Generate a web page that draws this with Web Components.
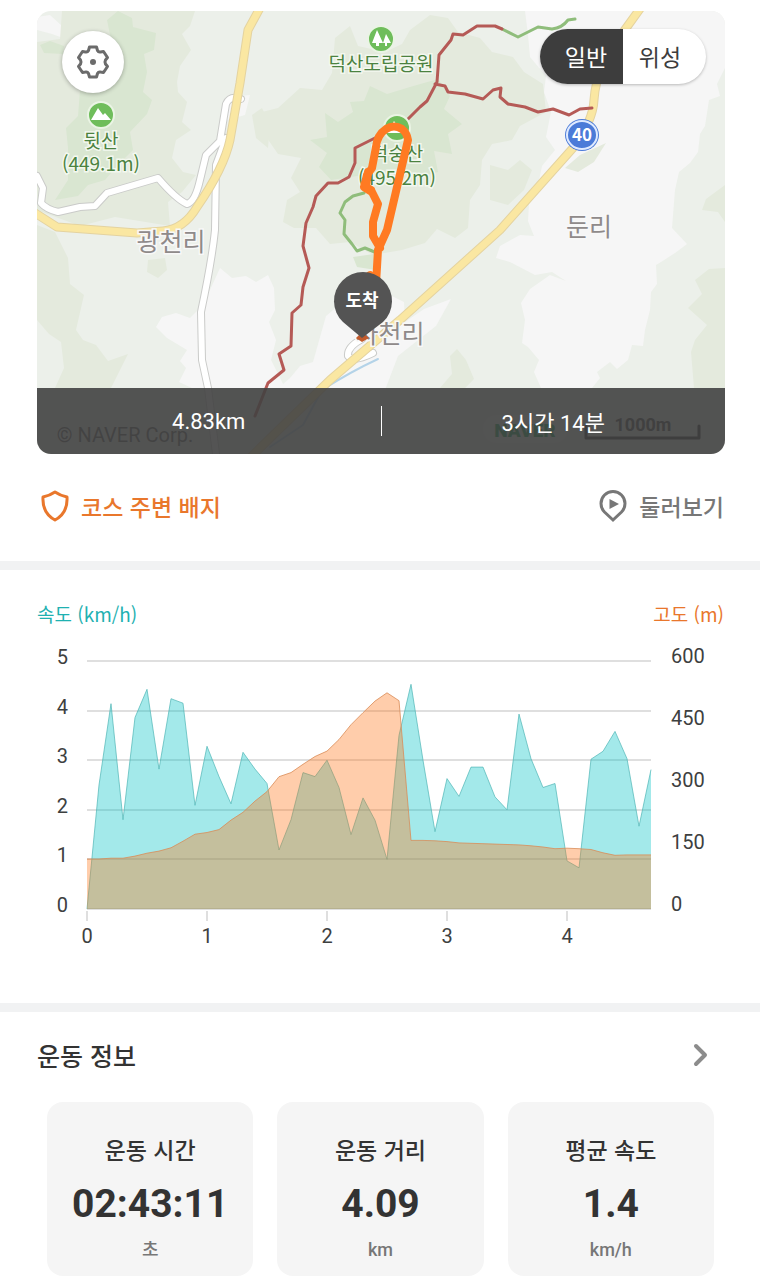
<!DOCTYPE html>
<html lang="ko">
<head>
<meta charset="utf-8">
<meta name="viewport" content="width=device-width, initial-scale=1">
<title>코스 기록</title>
<style>
  body {
    margin: 0;
    background: #fff;
    color: #333;
    font-family: Roboto, "Noto Sans CJK KR", sans-serif;
    --korean: "Noto Sans CJK KR", sans-serif;
    --gutter-left: 37px;
    --gutter-right: 36px;
    --orange: #e9772c;
    --teal: #1fb1b1;
    --gray: #777;
  }
</style>
</head>
<body>
<activity-page>
  <course-map distance="4.83km" duration="3시간 14분"></course-map>
  <course-actions></course-actions>
  <section-divider></section-divider>
  <speed-chart></speed-chart>
  <section-divider></section-divider>
  <workout-info heading="운동 정보">
    <stat-card label="운동 시간" unit="초">02:43:11</stat-card>
    <stat-card label="운동 거리" unit="km">4.09</stat-card>
    <stat-card label="평균 속도" unit="km/h">1.4</stat-card>
  </workout-info>
</activity-page>

<script>
function define(name, render, setup) {
  customElements.define(name, class extends HTMLElement {
    connectedCallback() {
      if (this.shadowRoot) return;
      this.attachShadow({ mode: 'open' });
      this.shadowRoot.innerHTML = render(this);
      if (setup) setup(this.shadowRoot);
    }
  });
}

const BUTTON_RESET = `
  button {
    border: 0;
    padding: 0;
    background: none;
    color: inherit;
    font: inherit;
    cursor: pointer;
  }
`;

// -- activity-page --
define('activity-page', () => `
  <style>
    :host { display: block; padding: 11px 0 4px; }
  </style>
  <slot></slot>
`);

// -- section-divider --
define('section-divider', () => `
  <style>
    :host { display: block; height: 9px; background: #f1f2f3; }
  </style>
`);

// -- map-toggle --
define('map-toggle', () => `
  <style>
    ${BUTTON_RESET}
    :host {
      display: flex;
      overflow: hidden;
      border-radius: 28px;
      background: #fff;
      box-shadow: 0 1px 3px rgba(0, 0, 0, .25);
      font-family: var(--korean);
    }
    button { width: 83px; line-height: 55px; font-size: 23px; color: #3d3d3d; }
    button:first-of-type { padding-left: 9px; }
    button:last-of-type { padding-right: 9px; }
    button[aria-pressed="true"] { background: #3d3d3d; color: #fff; }
  </style>
  <button type="button" aria-pressed="true">일반</button>
  <button type="button" aria-pressed="false">위성</button>
`, root => {
  const buttons = root.querySelectorAll('button');
  buttons.forEach(button => button.addEventListener('click', () => {
    buttons.forEach(b => b.setAttribute('aria-pressed', String(b === button)));
  }));
});

// -- course-canvas: the drawn map --
define('course-canvas', () => `
  <style>
    :host { display: block; }
    svg { display: block; width: 100%; height: 100%; }
    text { font-family: "Noto Sans CJK KR", sans-serif; text-anchor: middle; }
    path { fill: none; stroke-linejoin: round; stroke-linecap: round; }
    .plain { fill: #f6f6f6; }
    .wood { fill: #e4eadd; }
    .forest { fill: #d9e6d1; }
    .case { stroke: #cacbc9; stroke-width: 8; }
    .road { stroke: #fff; stroke-width: 6; }
    .main-case { stroke: #e4d3a0; stroke-width: 9; }
    .main { stroke: #fae7a2; stroke-width: 7; }
    .trail { stroke: #b55a56; stroke-width: 3; }
    .path { stroke: #8fbd7b; stroke-width: 3; }
    .route { stroke: #ff7a22; stroke-width: 8; }
    .peak { font-size: 19px; fill: #4b8240; stroke: #f3f8ef; stroke-width: 3; paint-order: stroke; }
    .town { font-size: 25px; fill: #8f8a8a; stroke: #f8f8f8; stroke-width: 3; paint-order: stroke; }
    .marker { fill: #6fbd5b; stroke: #eaf4e4; stroke-width: 2; }
    .glyph { fill: #fff; }
    .dirt { fill: #c25a2c; }
    .pin { fill: #545454; }
    .latin { font-family: Roboto, sans-serif; }
  </style>
  <svg viewBox="37 11 688 443" preserveAspectRatio="xMidYMid slice" role="img" aria-label="코스 지도">
    <rect x="37" y="11" width="688" height="443" fill="#ecf0ea"/>

    <g class="plain">
      <polygon points="525,11 725,11 725,68 717,84 720,96 709,100 705,126 700,134 698,152 690,163 679,172 675,190 672,228 687,244 675,253 661,262 656,265 657,284 651,292 650,310 645,330 643,346 632,345 628,360 617,369 610,362 597,372 600,378 592,388 541,388 534,372 539,360 528,347 522,343 525,320 521,303 530,289 550,275 566,281 552,272 535,275 510,262 496,258 500,246 520,235 534,236 528,221 529,204 538,185 542,166 555,150 546,137 551,112 544,92 546,76 530,57 528,35"/>
      <polygon points="220,268 232,278 246,276 256,282 268,275 274,288 275,310 269,322 276,340 271,360 285,388 192,388 179,382 186,368 180,361 187,350 167,338 156,327 162,317 176,313 190,318 198,310 210,290"/>
      <polygon points="326,316 345,300 390,295 404,302 405,322 424,309 451,299 436,326 398,356 385,390 276,390 290,378 300,366 313,362"/>
      <polygon points="37,17 50,15 62,26 63,38 52,34 37,30"/>
      <polygon points="230,97 250,95 245,115 227,120"/>
    </g>
    <g class="wood">
      <polygon points="62,11 195,11 190,26 182,34 191,50 180,66 177,82 178,92 187,102 182,122 191,130 176,140 172,158 183,172 196,175 182,192 168,202 170,226 115,217 80,226 37,210 37,42 60,39"/>
      <polygon points="37,225 55,232 68,258 70,284 84,295 76,330 83,340 96,345 108,361 128,354 120,370 111,388 55,388 64,368 61,342 49,334 37,320"/>
      <polygon points="335,38 350,26 358,46 385,52 402,44 410,30 430,15 448,18 458,32 480,38 492,52 513,57 524,72 543,84 546,112 520,126 512,140 492,144 482,160 480,185 470,200 468,228 455,238 437,229 425,243 402,250 373,255 350,242 330,244 316,228 294,228 283,222 287,200 300,192 291,178 301,158 278,154 260,128 262,112 278,108 300,88 322,90 332,73"/>
      <polygon points="725,268 709,269 695,280 702,294 688,308 707,325 695,340 691,352 694,388 725,388"/>
      <polygon points="725,185 706,199 702,210 718,212 725,222"/>
      <polygon points="440,388 452,374 450,356 457,349 466,360 474,379 465,388"/>
      <polygon points="148,260 165,258 167,270 158,278 147,272"/>
      <polygon points="490,165 508,170 520,160 532,170 524,190 508,205 490,200"/>
      <polygon points="252,115 262,108 270,124 268,148 256,138"/>
      <polygon points="565,168 580,155 606,143 594,162 578,172"/>
    </g>
    <g class="forest">
      <polygon points="107,20 118,11 132,18 133,27 156,33 154,50 144,54 147,72 143,92 152,100 147,114 130,132 133,150 117,166 105,180 88,185 78,196 55,200 68,180 68,148 66,128 78,116 80,90 106,76 113,50"/>
      <polygon points="325,113 338,122 353,112 350,102 364,101 370,86 387,94 410,87 438,79 450,96 444,109 462,124 448,134 452,154 434,151 438,172 414,178 396,169 384,182 357,176 331,180 319,167 327,153 310,140 327,137"/>
      <polygon points="40,45 50,41 64,46 63,54 44,53"/>
      <polygon points="353,257 374,254 376,270 357,267"/>
    </g>

    <path class="case" d="M37 176L43 188L41 203Q46 209 58 212L80 207L95 206L107 193L158 178Q176 199 187 204Q195 202 200 180L206 155L220 141L226 104Q230 95 241 99M226 138L216 165L215 230Q212 260 201 312L202 360L208 388L216 454M362 339Q347 347 348 356Q353 363 373 353"/>
    <path class="road" d="M37 176L43 188L41 203Q46 209 58 212L80 207L95 206L107 193L158 178Q176 199 187 204Q195 202 200 180L206 155L220 141L226 104Q230 95 241 99M226 138L216 165L215 230Q212 260 201 312L202 360L208 388L216 454M362 339Q347 347 348 356Q353 363 373 353"/>
    <path d="M378 359Q350 372 322 390L303 425L270 447" stroke="#b4d3e8" stroke-width="2"/>
    <path class="main-case" d="M260 8L248 30L240 83L230 140Q224 168 197 207Q184 229 163 231L137 233L57 227L35 213M642 6L624 31Q596 66 594 100Q593 121 573 148L500 230L400 320L330 380L262 446L250 458"/>
    <path class="main" d="M260 8L248 30L240 83L230 140Q224 168 197 207Q184 229 163 231L137 233L57 227L35 213M642 6L624 31Q596 66 594 100Q593 121 573 148L500 230L400 320L330 380L262 446L250 458"/>

    <path class="path" d="M502 29L518 37L538 27L552 29Q562 28 568 20L575 19M364 193L353 196L345 202L340 213L345 220L344 234L352 244L357 251L365 248L377 253"/>
    <path class="trail" d="M255 416L266 388L268 383L284 370L279 354L291 346L292 313L301 305L303 287L309 268L303 246L306 223L313 207L316 196L328 183L338 183L349 177L355 163L355 148L367 142L377 137M405 122L420 107L427 101L437 82L439 55L451 40L453 34L463 35L477 26L495 26L502 29M435 84L445 86L448 92L465 94L483 99L493 90L501 88L500 97L508 104L525 107L538 112L553 109L569 115L580 109L592 108"/>

    <circle class="marker" cx="381" cy="39" r="13"/>
    <polygon class="glyph" points="377,30 372,43 376,43 376,46 379,46 379,43 383,43"/>
    <polygon class="glyph" points="386,34 383,43 385,43 385,46 387,46 387,43 391,43"/>
    <text class="peak" x="381" y="71">덕산도립공원</text>
    <circle class="marker" cx="101" cy="115" r="13"/>
    <polygon class="glyph" points="91,120 98,108 103,115 105,113 111,120"/>
    <text class="peak" x="101" y="148">뒷산</text>
    <text class="peak" x="101" y="171">(449.1m)</text>
    <circle class="marker" cx="397" cy="128" r="13"/>
    <polygon class="glyph" points="387,133 394,121 399,128 401,126 407,133"/>
    <text class="peak" x="397" y="161">덕숭산</text>
    <text class="peak" x="397" y="185">(495.2m)</text>
    <text class="town" x="171" y="251">광천리</text>
    <text class="town" x="589" y="236">둔리</text>
    <text class="town" x="390" y="343">사천리</text>

    <ellipse cx="582" cy="135" rx="17" ry="16" fill="#4b7bd8"/>
    <ellipse cx="582" cy="135" rx="15" ry="14" fill="#4b7bd8" stroke="#dfeaff" stroke-width="2"/>
    <text x="582" y="141" font-size="17" font-weight="700" fill="#fff">40</text>

    <path class="route" d="M376 284L378 250L387 230L408 140Q407 133 402 129Q394 124 386 129Q377 135 376 147L372 168L367 175L364 187L372 192L378 204L373 222L373 236L380 248"/>
    <path class="route" stroke-width="11" d="M368 172L366 187L371 190"/>
    <path class="route" d="M370 275L372 282"/>
    <polygon class="dirt" points="356,338 362,332 369,338 362,342"/>
    <path class="pin" style="fill:#545454" d="M362 338L343 322A29 29 0 1 1 383 322Z"/>
    <text x="362" y="307" font-size="18" font-weight="700" fill="#fff">도착</text>

    <text class="latin" x="125" y="442" font-size="20" fill="#555">© NAVER Corp.</text>
    <rect x="483" y="415" width="85" height="28" rx="14" fill="#fff" fill-opacity=".5"/>
    <text class="latin" x="525" y="437" font-size="19" font-weight="900" fill="#03a64a">NAVER</text>
    <text class="latin" x="643" y="431" font-size="18" font-weight="700" fill="#333">1000m</text>
    <path d="M586 426V438H699V426" stroke="#222" stroke-width="3"/>
  </svg>
`);

// -- course-map --
define('course-map', host => `
  <style>
    ${BUTTON_RESET}
    :host {
      display: block;
      position: relative;
      height: 443px;
      margin: 0 35px 0 37px;
      border-radius: 14px;
      overflow: hidden;
    }
    course-canvas { height: 100%; }
    .settings {
      position: absolute;
      top: 20px;
      left: 25px;
      display: grid;
      place-items: center;
      width: 62px;
      height: 62px;
      border-radius: 50%;
      background: #fff;
      box-shadow: 0 1px 4px rgba(0, 0, 0, .3);
    }
    map-toggle { position: absolute; top: 18px; right: 19px; }
    .summary {
      position: absolute;
      inset: auto 0 0;
      display: flex;
      align-items: center;
      height: 66px;
      background: rgba(65, 65, 65, .9);
      color: #fff;
      font-size: 22px;
      text-align: center;
    }
    .summary span { flex: 1; }
    .summary i { width: 1px; height: 30px; background: #fff; }
  </style>
  <course-canvas></course-canvas>
  <button class="settings" type="button" aria-label="지도 설정">
    <svg width="34" height="34" viewBox="0 0 34 34" fill="none" stroke="#6b6b6b" stroke-width="3" stroke-linejoin="round">
      <path d="M13.500 2h7l1 3.500q1 2 3 1.500l3-.5 4 6-2 2.500q-1 2 0 4l2 2.500-4 6-3-.5q-2-.5-3 1.500l-1 3.500h-7l-1-3.500q-1-2-3-1.500l-3 .5-4-6 2-2.500q1-2 0-4l-2-2.500 4-6 3 .5q2 .5 3-1.500z"/>
      <circle cx="17" cy="17" r="3" fill="#6b6b6b" stroke="none"/>
    </svg>
  </button>
  <map-toggle></map-toggle>
  <div class="summary">
    <span>${host.getAttribute('distance')}</span>
    <i></i>
    <span>${host.getAttribute('duration')}</span>
  </div>
`);

// -- course-actions --
define('course-actions', () => `
  <style>
    ${BUTTON_RESET}
    :host {
      display: flex;
      justify-content: space-between;
      padding: 34px var(--gutter-right) 37px 41px;
      font-family: var(--korean);
      font-size: 23px;
      line-height: 36px;
    }
    button { display: flex; align-items: center; gap: 12px; font-weight: 500; }
    .badge { color: var(--orange); }
    .tour { color: var(--gray); }
  </style>
  <button class="badge" type="button">
    <svg width="28" height="34" viewBox="0 0 28 34" fill="none" stroke="currentColor" stroke-width="3" stroke-linejoin="round">
      <path d="M14 3Q19 6.500 26 8Q27 24 14 31Q1 24 2 8Q9 6.500 14 3Z"/>
    </svg>
    코스 주변 배지
  </button>
  <button class="tour" type="button">
    <svg width="28" height="34" viewBox="0 0 28 34" fill="none" stroke="currentColor" stroke-width="3">
      <path d="M14 31L5.500 23A12 12 0 1 1 22.500 23Z"/>
      <path d="M10.500 10L20 15L10.500 20Z" fill="currentColor" stroke="none"/>
    </svg>
    둘러보기
  </button>
`);

// -- speed-chart: one sample every 0.1 km --
const SPEED = [
  0, 2.5, 4.14, 1.8, 3.86, 4.43, 2.82, 4.24, 4.15, 2.09,
  3.28, 2.67, 2.12, 3.16, 2.82, 2.53, 1.19, 1.8, 2.75, 2.67,
  3, 2.45, 1.5, 2.24, 1.79, 1, 3.5, 4.53, 3, 1.56,
  2.63, 2.27, 2.86, 2.86, 2.26, 2, 3.93, 3.03, 2.45, 2.53,
  .97, .83, 3.02, 3.18, 3.58, 3.03, 1.67, 2.81
];
const ALTITUDE = [
  121, 121, 123, 123, 128, 135, 140, 148, 164, 181,
  185, 192, 215, 234, 261, 284, 320, 330, 350, 369,
  382, 410, 446, 475, 503, 523, 504, 166, 166, 165,
  163, 160, 159, 158, 157, 156, 155, 153, 150, 146,
  147, 146, 144, 136, 130, 131, 131, 131
];
const PLOT = { left: 87, right: 651, top: 21, bottom: 269, step: 12 };

function linePoints(values, max) {
  const height = PLOT.bottom - PLOT.top;
  return values
    .map((v, i) => `${PLOT.left + i * PLOT.step},${(PLOT.bottom - v / max * height).toFixed(1)}`)
    .join(' ');
}

function area(values, max, name) {
  const line = linePoints(values, max);
  return `
    <polygon class="${name}" points="${PLOT.left},${PLOT.bottom} ${line} ${PLOT.right},${PLOT.bottom}"/>
    <polyline class="${name}-line" points="${line}"/>`;
}

function axes() {
  const height = PLOT.bottom - PLOT.top;
  const at = share => Math.round(PLOT.bottom - share * height);
  let out = '';
  for (let i = 0; i <= 5; i++) {
    out += `<line x1="${PLOT.left}" x2="${PLOT.right}" y1="${at(i / 5)}" y2="${at(i / 5)}"/>`;
    out += `<text class="left" x="68" y="${at(i / 5) + 3}">${i}</text>`;
  }
  for (let i = 0; i <= 4; i++) {
    out += `<text x="671" y="${at(i / 4) + 2}">${i * 150}</text>`;
    const x = PLOT.left + i * 120;
    out += `<line x1="${x}" x2="${x}" y1="271" y2="281"/>`;
    out += `<text class="mid" x="${x}" y="303">${i}</text>`;
  }
  return out;
}

define('speed-chart', () => `
  <style>
    :host { display: block; padding: 28px 0 43px; }
    header {
      display: flex;
      justify-content: space-between;
      padding: 0 var(--gutter-right) 0 var(--gutter-left);
      font-family: var(--korean);
      font-size: 19px;
      line-height: 32px;
    }
    .speed-label { color: var(--teal); }
    .altitude-label { color: var(--orange); }
    svg { display: block; width: 100%; margin-top: 10px; }
    line { stroke: #dfdfdf; stroke-width: 2; }
    text { font-size: 20px; fill: #3d4040; }
    .left { text-anchor: end; }
    .mid { text-anchor: middle; }
    .speed { fill: #00c2c5; fill-opacity: .36; }
    .altitude { fill: #ff7416; fill-opacity: .36; }
    polyline { fill: none; stroke-width: 1; }
    .speed-line { stroke: #4fb5b5; stroke-opacity: .7; }
    .altitude-line { stroke: #d98c58; stroke-opacity: .8; }
  </style>
  <header>
    <span class="speed-label">속도 (km/h)</span>
    <span class="altitude-label">고도 (m)</span>
  </header>
  <svg viewBox="0 0 760 320" role="img" aria-label="거리별 속도와 고도">
    ${axes()}
    ${area(SPEED, 5, 'speed')}
    ${area(ALTITUDE, 600, 'altitude')}
  </svg>
`);

// -- workout-info --
define('workout-info', host => `
  <style>
    ${BUTTON_RESET}
    :host { display: block; padding-top: 25px; }
    header {
      display: flex;
      align-items: center;
      justify-content: space-between;
      padding: 0 45px 0 var(--gutter-left);
      font-family: var(--korean);
      line-height: 36px;
    }
    h2 { margin: 0; font-size: 25px; font-weight: 500; }
    button { display: grid; place-items: center; width: 28px; height: 36px; }
    .cards {
      display: grid;
      grid-template-columns: repeat(3, 1fr);
      gap: 24px;
      margin-top: 29px;
      padding: 0 46px 0 47px;
    }
  </style>
  <header>
    <h2>${host.getAttribute('heading')}</h2>
    <button type="button" aria-label="${host.getAttribute('heading')} 더 보기">
      <svg width="16" height="26" viewBox="0 0 16 26" fill="none" stroke="#8c8c8c" stroke-width="4" stroke-linecap="round" stroke-linejoin="round">
        <path d="M3 4L12 13L3 22"/>
      </svg>
    </button>
  </header>
  <div class="cards"><slot></slot></div>
`);

// -- stat-card --
define('stat-card', host => `
  <style>
    :host {
      display: flex;
      flex-direction: column;
      align-items: center;
      padding: 30px 8px 14px;
      border-radius: 16px;
      background: #f5f5f5;
    }
    .label { font-family: var(--korean); font-size: 23px; font-weight: 500; line-height: 34px; }
    .value { margin: 14px 0 10px; font-size: 39px; font-weight: 700; line-height: 48px; }
    .unit { color: var(--gray); font-size: 18px; font-weight: 500; line-height: 24px; }
  </style>
  <span class="label">${host.getAttribute('label')}</span>
  <span class="value"><slot></slot></span>
  <span class="unit">${host.getAttribute('unit')}</span>
`);
</script>
</body>
</html>
